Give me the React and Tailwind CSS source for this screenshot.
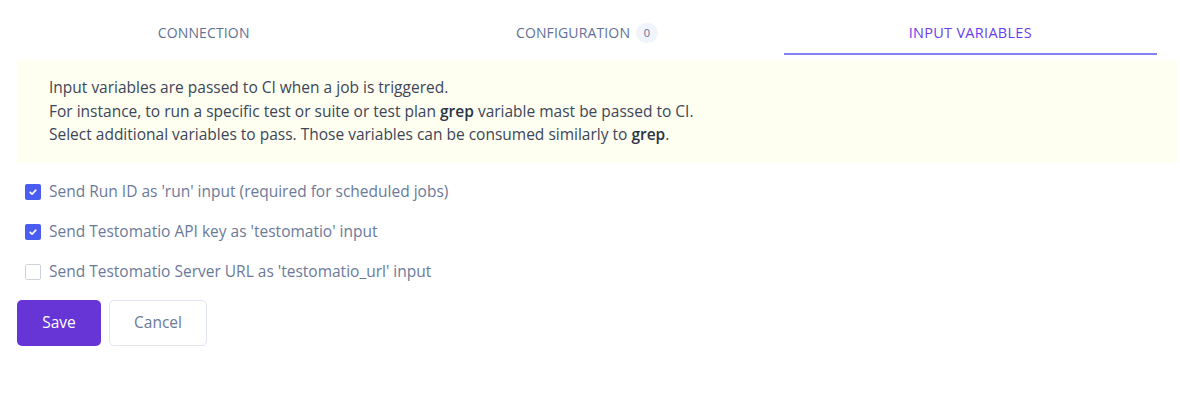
import React from "react";

const font = { fontFamily: '"Open Sans", "Noto Sans", sans-serif' };

function Check({ checked }) {
  return checked ? (
    <span className="flex h-4 w-4 shrink-0 items-center justify-center rounded-[2px] bg-[#4b5cf0]">
      <svg viewBox="0 0 16 16" className="h-[10px] w-[10px]" fill="none" stroke="white" strokeWidth="2.6" strokeLinecap="round" strokeLinejoin="round">
        <path d="M3.5 8.5l3 3 6-6.5" />
      </svg>
    </span>
  ) : (
    <span className="h-4 w-4 shrink-0 rounded-[2px] border border-[#cdd3de] bg-white" />
  );
}

export default function App() {
  return (
    <div className="w-[1180px] h-[406px] bg-white text-[15.5px]" style={font}>
      <div className="flex gap-[10px] px-[17px] pr-[23px]">
        <div className="flex-1 h-[55px] flex justify-center pt-[23px] leading-[20px] text-[14px] text-[#5f7194] tracking-[0.01em]">
          CONNECTION
        </div>
        <div className="flex-1 h-[55px] flex justify-center pt-[23px] leading-[20px] text-[14px] text-[#5f7194] tracking-[0.01em]">
          CONFIGURATION
          <span className="ml-[6px] flex h-[20px] min-w-[22px] items-center justify-center rounded-full bg-[#f1f5fb] px-[6px] text-[11px] text-[#5f7194]">0</span>
        </div>
        <div className="flex-1 h-[55px] flex justify-center pt-[23px] leading-[20px] text-[14.5px] text-[#6a3ef0] tracking-[0.02em] border-b-2 border-[#8182f4]">
          INPUT VARIABLES
        </div>
      </div>
      <div className="mx-[17px] mr-[3px] mt-[5px] bg-[#fefff1] px-[32px] py-[16px] text-[#3c4559] leading-[23.5px]">
        <div>Input variables are passed to CI when a job is triggered.</div>
        <div>For instance, to run a specific test or suite or test plan <b className="font-semibold text-[#2d3445]">grep</b> variable mast be passed to CI.</div>
        <div>Select additional variables to pass. Those variables can be consumed similarly to <b className="font-semibold text-[#2d3445]">grep</b>.</div>
      </div>
      <div className="flex flex-col gap-[20px] pl-[25px] pt-[19px] text-[#6b7a99]">
        <label className="flex items-center gap-[8px] h-[20px]"><Check checked /> <span>Send Run ID as 'run' input (required for scheduled jobs)</span></label>
        <label className="flex items-center gap-[8px] h-[20px]"><Check checked /> <span>Send Testomatio API key as 'testomatio' input</span></label>
        <label className="flex items-center gap-[8px] h-[20px]"><Check /> <span>Send Testomatio Server URL as 'testomatio_url' input</span></label>
      </div>
      <div className="flex gap-[8px] pl-[17px] pt-[18px]">
        <button className="h-[46px] w-[84px] rounded-[5px] bg-[#6735d6] text-white">Save</button>
        <button className="h-[46px] w-[98px] rounded-[5px] border border-[#dfe4ee] bg-white text-[#6b7a99]">Cancel</button>
      </div>
    </div>
  );
}
